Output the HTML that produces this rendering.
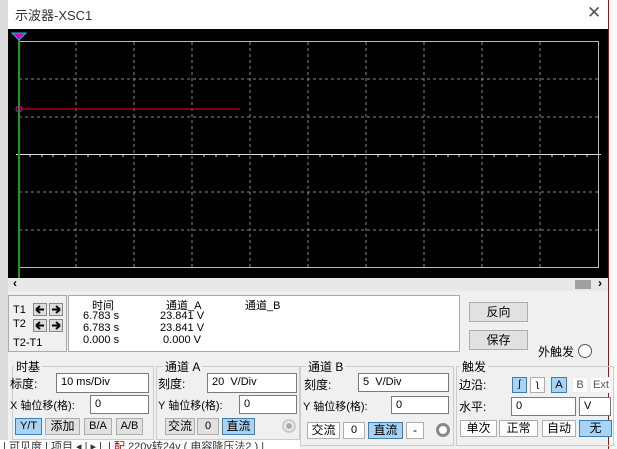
<!DOCTYPE html>
<html><head><meta charset="utf-8"><style>
body{margin:0;width:617px;height:449px;overflow:hidden;background:#f0f0f0;position:relative;font-family:"Liberation Sans","Noto Sans CJK SC",sans-serif;font-size:12px;color:#000}
.a{position:absolute;white-space:nowrap}
.in{position:absolute;background:#fff;border:1px solid #7a7a7a;box-sizing:border-box;font-size:11px;padding-left:4px;line-height:17px}
.b{position:absolute;box-sizing:border-box;border:1px solid #adadad;background:#e1e1e1;text-align:center;font-size:12px}
.bw{background:#fff}
.sel{background:#a9d3f5;border:1px solid #3c7fb1}
.lbl{position:absolute;font-size:12px}
.ar{position:absolute;width:14px;height:13px;box-sizing:border-box;border:1px solid #888;background:#ddd}
</style></head><body>
<div class="a" style="left:0;top:0;width:8px;height:449px;background:#dcdcdc"></div>
<div class="a" style="left:8px;top:0;width:600px;height:29px;background:#fff"></div>
<div class="a" style="left:15px;top:5px;font-size:13px;color:#333">示波器-XSC1</div>
<div class="a" style="left:587px;top:3px;font-size:17px;color:#555">✕</div>
<div class="a" style="left:608px;top:0;width:9px;height:449px;background:#fafafa;border-left:1px solid #c00"></div>
<svg class="a" style="left:8px;top:29px" width="600" height="249">
<rect width="600" height="249" fill="#000"/>
<rect x="10.5" y="12.5" width="580" height="226" fill="none" stroke="#bbb"/>
<g stroke="#888" stroke-dasharray="3,3">
<path d="M68 13V238M126 13V238M184 13V238M242 13V238M300 13V238M358 13V238M416 13V238M474 13V238M532 13V238"/>
<path d="M11 50H590M11 88H590M11 163H590M11 201H590"/>
</g>
<path d="M8 125.5H593" stroke="#ddd"/>
<g stroke="#ddd"><path d="M22 125V128M34 125V128M45 125V128M57 125V128M80 125V128M92 125V128M103 125V128M115 125V128M138 125V128M150 125V128M161 125V128M173 125V128M196 125V128M208 125V128M219 125V128M231 125V128M254 125V128M266 125V128M277 125V128M289 125V128M312 125V128M324 125V128M335 125V128M347 125V128M370 125V128M382 125V128M393 125V128M405 125V128M428 125V128M440 125V128M451 125V128M463 125V128M486 125V128M498 125V128M509 125V128M521 125V128M544 125V128M556 125V128M567 125V128M579 125V128"/></g>
<path d="M11 6V249" stroke="#1a9e1a" stroke-width="2"/>
<path d="M11 80H232" stroke="#c00" stroke-width="1.2"/>
<circle cx="11" cy="80" r="3" fill="none" stroke="#c0c"/>
<path d="M4 4H18L11 11Z" fill="#c0c" stroke="#0cc"/>
</svg>
<div class="a" style="left:8px;top:278px;width:600px;height:13px;background:#e8e8e8"></div>
<div class="a" style="left:13px;top:276px;font-size:12px;font-weight:bold">‹</div>
<div class="a" style="left:575px;top:280px;width:16px;height:9px;background:#a0a0a0"></div>
<div class="a" style="left:598px;top:276px;font-size:12px;font-weight:bold">›</div>
<div class="a" style="left:8px;top:295px;width:59px;height:57px;border:1px solid #aaa;box-sizing:border-box"></div>
<div class="a" style="left:13px;top:304px;font-size:11px">T1</div>
<div class="a" style="left:13px;top:318px;font-size:11px">T2</div>
<div class="a" style="left:13px;top:337px;font-size:11px">T2-T1</div>
<svg class="ar" style="left:33px;top:303px" viewBox="0 0 12 11"><path d="M2 5.5H10M2 5.5L6 2M2 5.5L6 9" stroke="#000" stroke-width="2" fill="none"/></svg>
<svg class="ar" style="left:49px;top:303px" viewBox="0 0 12 11"><path d="M2 5.5H10M10 5.5L6 2M10 5.5L6 9" stroke="#000" stroke-width="2" fill="none"/></svg>
<svg class="ar" style="left:33px;top:319px" viewBox="0 0 12 11"><path d="M2 5.5H10M2 5.5L6 2M2 5.5L6 9" stroke="#000" stroke-width="2" fill="none"/></svg>
<svg class="ar" style="left:49px;top:319px" viewBox="0 0 12 11"><path d="M2 5.5H10M10 5.5L6 2M10 5.5L6 9" stroke="#000" stroke-width="2" fill="none"/></svg>
<div class="a" style="left:68px;top:295px;width:392px;height:57px;background:#fff;border:1px solid #aaa;box-sizing:border-box"></div>
<div class="a" style="left:92px;top:297px;font-size:11px">时间</div>
<div class="a" style="left:166px;top:297px;font-size:11px">通道_A</div>
<div class="a" style="left:245px;top:297px;font-size:11px">通道_B</div>
<div class="a" style="left:83px;top:310px;font-size:11px;line-height:12px">6.783 s<br>6.783 s<br>0.000 s</div>
<div class="a" style="left:160px;top:310px;font-size:11px;line-height:12px">23.841 V<br>23.841 V<br>&nbsp;0.000 V</div>
<div class="b" style="left:469px;top:302px;width:59px;height:20px;line-height:18px">反向</div>
<div class="b" style="left:469px;top:330px;width:59px;height:20px;line-height:18px">保存</div>
<div class="a" style="left:538px;top:343px">外触发</div>
<div class="a" style="left:578px;top:344px;width:12px;height:12px;border:1px solid #555;border-radius:50%;background:#fff"></div>
<div class="a" style="left:8px;top:356px;width:292px;height:84px;background:#f0f0f0"></div>
<div class="a" style="left:12px;top:366px;width:140px;height:72px;border:1px solid #ccc"></div>
<div class="a" style="left:156px;top:366px;width:142px;height:72px;border:1px solid #ccc"></div>
<div class="a" style="left:300px;top:366px;width:152px;height:78px;border:1px solid #ccc"></div>
<div class="a" style="left:456px;top:366px;width:156px;height:78px;border:1px solid #ccc"></div>
<div class="a" style="left:14px;top:358px;background:#f0f0f0;padding:0 2px">时基</div>
<div class="a" style="left:163px;top:358px;background:#f0f0f0;padding:0 2px">通道 A</div>
<div class="a" style="left:306px;top:358px;background:#f0f0f0;padding:0 2px">通道 B</div>
<div class="a" style="left:460px;top:358px;background:#f0f0f0;padding:0 2px">触发</div>
<div class="lbl" style="left:10px;top:375px">标度:</div>
<div class="in" style="left:56px;top:373px;width:93px;height:20px">10 ms/Div</div>
<div class="lbl" style="left:10px;top:397px;font-size:11px">X 轴位移(格):</div>
<div class="in" style="left:90px;top:395px;width:59px;height:19px">0</div>
<div class="b sel" style="left:15px;top:418px;width:27px;height:17px;line-height:15px;font-size:11px">Y/T</div>
<div class="b" style="left:45px;top:418px;width:35px;height:17px;line-height:15px">添加</div>
<div class="b" style="left:84px;top:418px;width:28px;height:17px;line-height:15px;font-size:11px">B/A</div>
<div class="b" style="left:116px;top:418px;width:27px;height:17px;line-height:15px;font-size:11px">A/B</div>
<div class="lbl" style="left:158px;top:375px">刻度:</div>
<div class="in" style="left:207px;top:373px;width:90px;height:20px">20 &nbsp;V/Div</div>
<div class="lbl" style="left:158px;top:397px;font-size:11px">Y 轴位移(格):</div>
<div class="in" style="left:239px;top:395px;width:58px;height:19px">0</div>
<div class="b" style="left:165px;top:418px;width:30px;height:17px;line-height:15px">交流</div>
<div class="b" style="left:197px;top:418px;width:22px;height:17px;line-height:15px;font-size:11px">0</div>
<div class="b sel" style="left:222px;top:418px;width:33px;height:17px;line-height:15px">直流</div>
<div class="a" style="left:282px;top:419px;width:10px;height:10px;border:2px solid #ccc;border-radius:50%;background:#aaa;box-shadow:inset 0 0 0 2px #eee"></div>
<div class="lbl" style="left:304px;top:376px">刻度:</div>
<div class="in" style="left:358px;top:373px;width:91px;height:19px">5 &nbsp;V/Div</div>
<div class="lbl" style="left:303px;top:398px;font-size:11px">Y 轴位移(格):</div>
<div class="in" style="left:391px;top:396px;width:58px;height:18px">0</div>
<div class="b bw" style="left:307px;top:422px;width:33px;height:17px;line-height:15px">交流</div>
<div class="b bw" style="left:343px;top:422px;width:22px;height:17px;line-height:15px;font-size:11px">0</div>
<div class="b sel" style="left:368px;top:422px;width:35px;height:17px;line-height:15px">直流</div>
<div class="b bw" style="left:406px;top:422px;width:18px;height:17px;line-height:15px">-</div>
<div class="a" style="left:436px;top:423px;width:8px;height:8px;border:3px solid #888;border-radius:50%;background:#fff"></div>
<div class="lbl" style="left:459px;top:376px">边沿:</div>
<div class="b sel" style="left:512px;top:377px;width:15px;height:16px;font-size:10px;line-height:14px">ʃ</div>
<div class="b bw" style="left:530px;top:377px;width:15px;height:16px;font-size:10px;line-height:14px">ʅ</div>
<div class="b sel" style="left:551px;top:377px;width:16px;height:16px;font-size:11px;line-height:14px">A</div>
<div class="b bw" style="left:572px;top:377px;width:16px;height:16px;font-size:11px;line-height:14px;color:#555;border-color:#eee">B</div>
<div class="b bw" style="left:590px;top:377px;width:22px;height:16px;font-size:11px;line-height:14px;color:#555;border-color:#eee">Ext</div>
<div class="lbl" style="left:459px;top:398px">水平:</div>
<div class="in" style="left:511px;top:397px;width:65px;height:19px">0</div>
<div class="in" style="left:579px;top:397px;width:32px;height:19px">V</div>
<div class="b bw" style="left:460px;top:420px;width:37px;height:17px;line-height:15px">单次</div>
<div class="b bw" style="left:499px;top:420px;width:39px;height:17px;line-height:15px">正常</div>
<div class="b bw" style="left:542px;top:420px;width:34px;height:17px;line-height:15px">自动</div>
<div class="b sel" style="left:579px;top:420px;width:33px;height:17px;line-height:15px">无</div>
<div class="a" style="left:0;top:440px;width:300px;height:9px;background:#fff;overflow:hidden;font-size:11px;line-height:14px;color:#333">&nbsp;| 可见度 | 项目 ◂ | ▸ |&nbsp;&nbsp;|&nbsp;<span style="color:#a00">配</span> 220v转24v ( 电容降压法2 ) |</div>
</body></html>
